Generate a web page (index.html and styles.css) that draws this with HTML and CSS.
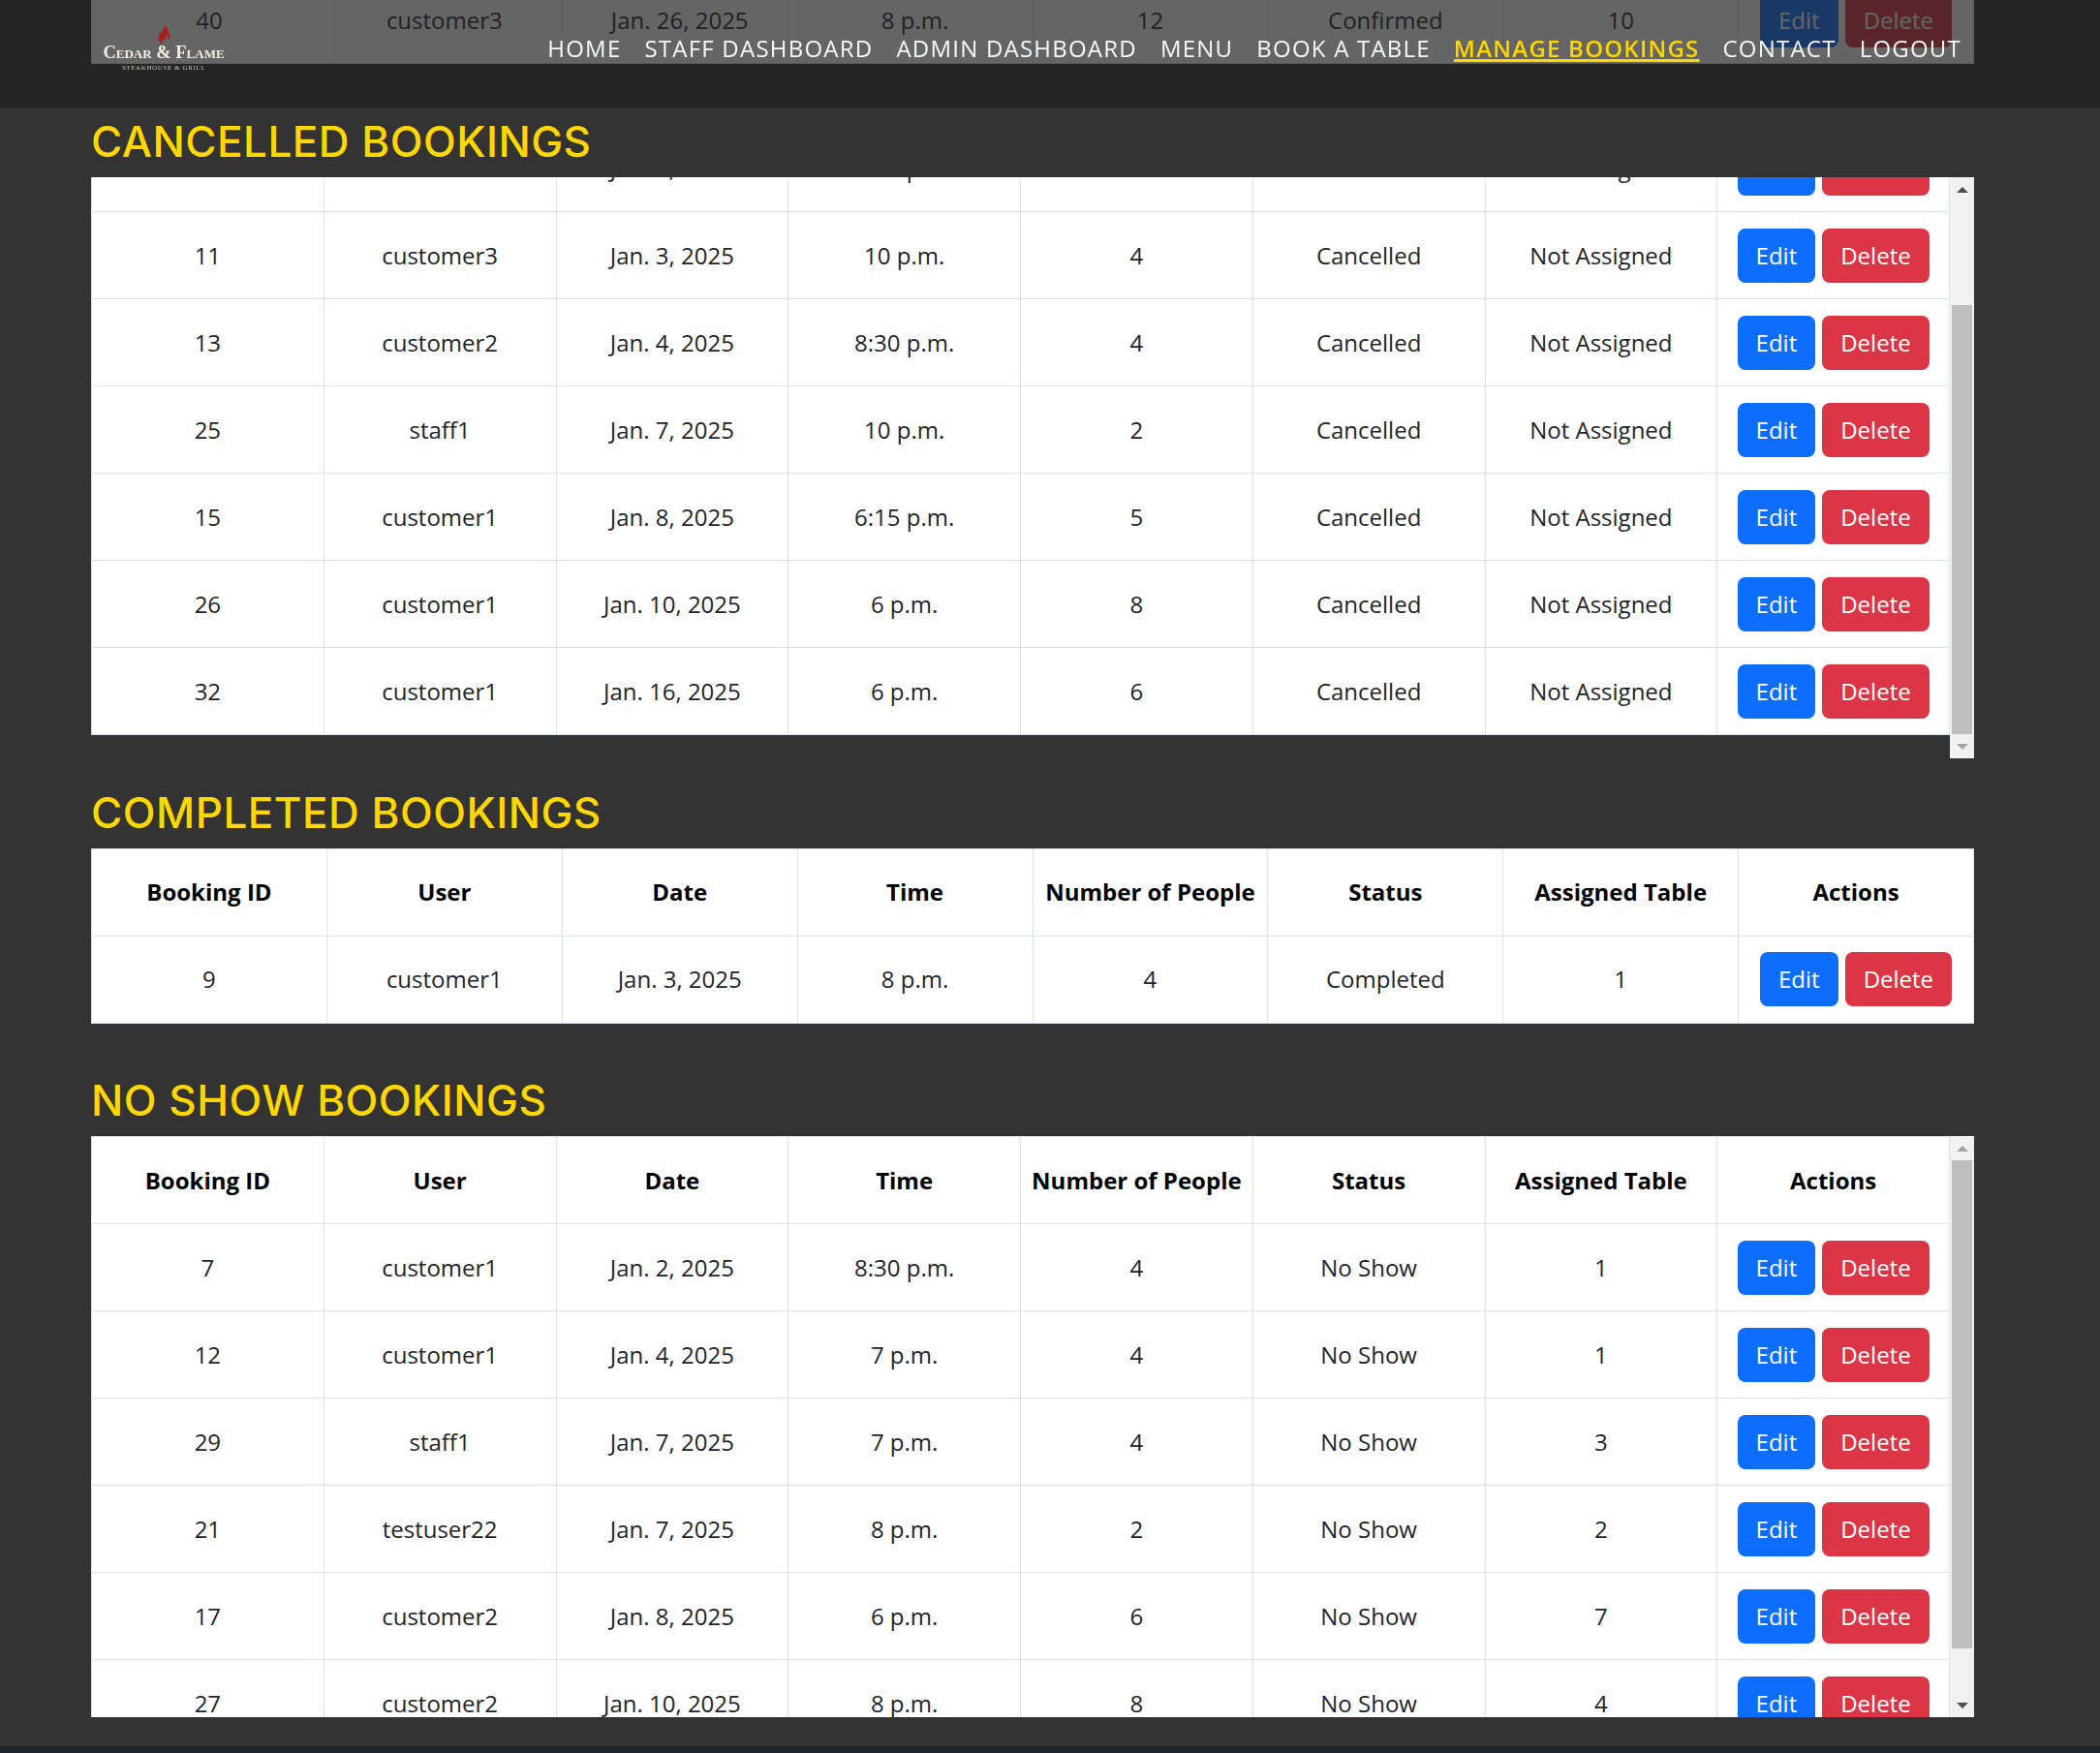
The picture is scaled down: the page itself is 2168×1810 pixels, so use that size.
FILE: index.html
```html
<!DOCTYPE html>
<html lang="en">

<head>
    <meta charset="UTF-8">
    <title>Manage Bookings</title>
    <link rel="stylesheet" href="styles.css">
</head>

<body>
    <header class="navbar">
        <div class="navbar-inner">
            <a class="logo">
                <svg class="logo-flame" viewBox="0 0 14 22" width="14" height="21">
                    <path d="M8 0c1 4-1 6-3 9C3 11 1 13 1 16c0 3 2 5 5 6-1-2-1-4 1-6 0 2 1 3 2 4-1-4 1-5 1-8 2 2 3 4 2 7 2-2 2-5 1-8C12 7 9 4 8 0z" fill="#a51f1f"/>
                </svg>
                <span class="logo-name">Cedar &amp; Flame</span>
                <span class="logo-sub">STEAKHOUSE &amp; GRILL</span>
            </a>
            <nav class="nav-links">
                <a>Home</a>
                <a>Staff Dashboard</a>
                <a>Admin Dashboard</a>
                <a>Menu</a>
                <a>Book a Table</a>
                <a class="active">Manage Bookings</a>
                <a>Contact</a>
                <a>Logout</a>
            </nav>
        </div>
    </header>

    <main class="content">
        <!-- end of the confirmed list, under the navbar -->
        <section class="section section-top">
            <table class="bookings">
                <tr><td>40</td><td>customer3</td><td>Jan. 26, 2025</td><td>8 p.m.</td><td>12</td><td>Confirmed</td><td>10</td><td><div class="actions"><a class="btn btn-edit">Edit</a><a class="btn btn-delete">Delete</a></div></td></tr>
            </table>
        </section>

        <section class="section section-scroll">
            <h2 class="section-title">Cancelled Bookings</h2>
            <div class="scroll-box">
                <div class="scroll-view">
                    <table class="bookings cancelled-list">
                        <tr><td>6</td><td>customer1</td><td>Jan. 2, 2025</td><td>8:30 p.m.</td><td>4</td><td>Cancelled</td><td>Not Assigned</td><td><div class="actions"><a class="btn btn-edit">Edit</a><a class="btn btn-delete">Delete</a></div></td></tr>
                        <tr><td>11</td><td>customer3</td><td>Jan. 3, 2025</td><td>10 p.m.</td><td>4</td><td>Cancelled</td><td>Not Assigned</td><td><div class="actions"><a class="btn btn-edit">Edit</a><a class="btn btn-delete">Delete</a></div></td></tr>
                        <tr><td>13</td><td>customer2</td><td>Jan. 4, 2025</td><td>8:30 p.m.</td><td>4</td><td>Cancelled</td><td>Not Assigned</td><td><div class="actions"><a class="btn btn-edit">Edit</a><a class="btn btn-delete">Delete</a></div></td></tr>
                        <tr><td>25</td><td>staff1</td><td>Jan. 7, 2025</td><td>10 p.m.</td><td>2</td><td>Cancelled</td><td>Not Assigned</td><td><div class="actions"><a class="btn btn-edit">Edit</a><a class="btn btn-delete">Delete</a></div></td></tr>
                        <tr><td>15</td><td>customer1</td><td>Jan. 8, 2025</td><td>6:15 p.m.</td><td>5</td><td>Cancelled</td><td>Not Assigned</td><td><div class="actions"><a class="btn btn-edit">Edit</a><a class="btn btn-delete">Delete</a></div></td></tr>
                        <tr><td>26</td><td>customer1</td><td>Jan. 10, 2025</td><td>6 p.m.</td><td>8</td><td>Cancelled</td><td>Not Assigned</td><td><div class="actions"><a class="btn btn-edit">Edit</a><a class="btn btn-delete">Delete</a></div></td></tr>
                        <tr><td>32</td><td>customer1</td><td>Jan. 16, 2025</td><td>6 p.m.</td><td>6</td><td>Cancelled</td><td>Not Assigned</td><td><div class="actions"><a class="btn btn-edit">Edit</a><a class="btn btn-delete">Delete</a></div></td></tr>
                    </table>
                </div>
                <div class="scrollbar">
                    <div class="scroll-btn"><span class="arrow-up"></span></div>
                    <div class="scroll-track">
                        <div class="thumb thumb-cancelled"></div>
                    </div>
                    <div class="scroll-btn"><span class="arrow-down arrow-off"></span></div>
                </div>
            </div>
        </section>

        <section class="section">
            <h2 class="section-title">Completed Bookings</h2>
            <table class="bookings completed-list">
                <tr><th>Booking ID</th><th>User</th><th>Date</th><th>Time</th><th>Number of People</th><th>Status</th><th>Assigned Table</th><th>Actions</th></tr>
                <tr><td>9</td><td>customer1</td><td>Jan. 3, 2025</td><td>8 p.m.</td><td>4</td><td>Completed</td><td>1</td><td><div class="actions"><a class="btn btn-edit">Edit</a><a class="btn btn-delete">Delete</a></div></td></tr>
            </table>
        </section>

        <section class="section">
            <h2 class="section-title">No Show Bookings</h2>
            <div class="scroll-box">
                <div class="scroll-view">
                    <table class="bookings">
                        <tr><th>Booking ID</th><th>User</th><th>Date</th><th>Time</th><th>Number of People</th><th>Status</th><th>Assigned Table</th><th>Actions</th></tr>
                        <tr><td>7</td><td>customer1</td><td>Jan. 2, 2025</td><td>8:30 p.m.</td><td>4</td><td>No Show</td><td>1</td><td><div class="actions"><a class="btn btn-edit">Edit</a><a class="btn btn-delete">Delete</a></div></td></tr>
                        <tr><td>12</td><td>customer1</td><td>Jan. 4, 2025</td><td>7 p.m.</td><td>4</td><td>No Show</td><td>1</td><td><div class="actions"><a class="btn btn-edit">Edit</a><a class="btn btn-delete">Delete</a></div></td></tr>
                        <tr><td>29</td><td>staff1</td><td>Jan. 7, 2025</td><td>7 p.m.</td><td>4</td><td>No Show</td><td>3</td><td><div class="actions"><a class="btn btn-edit">Edit</a><a class="btn btn-delete">Delete</a></div></td></tr>
                        <tr><td>21</td><td>testuser22</td><td>Jan. 7, 2025</td><td>8 p.m.</td><td>2</td><td>No Show</td><td>2</td><td><div class="actions"><a class="btn btn-edit">Edit</a><a class="btn btn-delete">Delete</a></div></td></tr>
                        <tr><td>17</td><td>customer2</td><td>Jan. 8, 2025</td><td>6 p.m.</td><td>6</td><td>No Show</td><td>7</td><td><div class="actions"><a class="btn btn-edit">Edit</a><a class="btn btn-delete">Delete</a></div></td></tr>
                        <tr><td>27</td><td>customer2</td><td>Jan. 10, 2025</td><td>8 p.m.</td><td>8</td><td>No Show</td><td>4</td><td><div class="actions"><a class="btn btn-edit">Edit</a><a class="btn btn-delete">Delete</a></div></td></tr>
                    </table>
                </div>
                <div class="scrollbar">
                    <div class="scroll-btn"><span class="arrow-up arrow-off"></span></div>
                    <div class="scroll-track">
                        <div class="thumb thumb-noshow"></div>
                    </div>
                    <div class="scroll-btn"><span class="arrow-down"></span></div>
                </div>
            </div>
        </section>
    </main>

    <footer class="footer"></footer>
</body>

</html>
```
FILE: styles.css
```css
* {
    box-sizing: border-box;
}

html,
body {
    height: 1810px;
    overflow: hidden;
}

body {
    margin: 0;
    background-color: #333;
    font-family: "Open Sans", "Noto Sans", sans-serif;
    font-size: 24px;
    color: #212529;
}

/* navbar */
.navbar {
    position: fixed;
    top: 0;
    left: 0;
    right: 0;
    z-index: 10;
    height: 112px;
    background-color: rgba(32, 32, 32, .69);
}

.navbar-inner {
    display: flex;
    justify-content: space-between;
    width: 1944px;
    margin-left: 94px;
    padding: 24px 13px 0 13px;
}

.logo {
    display: flex;
    flex-direction: column;
    align-items: center;
    width: 124px;
}

.logo-flame {
    display: block;
}

.logo-name {
    margin-top: 1px;
    font-family: "Liberation Serif", serif;
    font-variant: small-caps;
    font-weight: 700;
    font-size: 18.5px;
    line-height: 17px;
    white-space: nowrap;
    color: #f3efe4;
}

.logo-sub {
    margin-top: 3px;
    font-family: "Liberation Serif", serif;
    font-size: 7px;
    line-height: 8px;
    letter-spacing: .6px;
    white-space: nowrap;
    color: #c9c6be;
}

.nav-links {
    display: flex;
    gap: 24px;
    padding-top: 9px;
}

.nav-links a {
    font-size: 24px;
    line-height: 33px;
    letter-spacing: 1.22px;
    text-transform: uppercase;
    color: #f8f9fa;
}

.nav-links a.active {
    font-weight: 600;
    color: #ffd700;
    text-decoration: underline;
    text-decoration-thickness: 3px;
}

/* page */
.content {
    width: 1944px;
    margin: -25px 0 0 94px;
}

.section {
    margin-bottom: 52px;
}

.section-top {
    margin-bottom: 53px;
}

.section-scroll {
    margin-bottom: 29px;
}

.section-title {
    margin: 0 0 10px;
    padding-top: 1px;
    font-family: Inter, "Open Sans", sans-serif;
    font-size: 44px;
    font-weight: 500;
    line-height: 53px;
    text-transform: uppercase;
    letter-spacing: .5px;
    color: #ffd700;
}

/* tables */
.bookings {
    width: 100%;
    table-layout: fixed;
    border-collapse: collapse;
    background-color: #fff;
}

.bookings th,
.bookings td {
    height: 90px;
    padding: 0;
    border: 1px solid #dee2e6;
    text-align: center;
    vertical-align: middle;
}

.bookings th {
    font-weight: 700;
    color: #000;
}

.cancelled-list {
    margin-top: -55px;
}

.completed-list th,
.completed-list td {
    padding-bottom: 2px;
}

.actions {
    display: flex;
    justify-content: center;
    gap: 7px;
}

.btn {
    display: flex;
    align-items: center;
    height: 56px;
    padding: 0 19px;
    border-radius: 8px;
    color: #fff;
}

.btn-edit {
    background-color: #0d6efd;
}

.btn-delete {
    background-color: #dc3545;
}

/* scroller with the old style arrows */
.scroll-box {
    display: flex;
    height: 600px;
}

.scroll-view {
    flex: 1;
    overflow: hidden;
}

.scrollbar {
    display: flex;
    flex-direction: column;
    width: 25px;
    background-color: #f1f1f1;
}

.scroll-btn {
    display: flex;
    align-items: center;
    justify-content: center;
    height: 25px;
}

.arrow-up,
.arrow-down {
    width: 0;
    height: 0;
    border-left: 6px solid transparent;
    border-right: 6px solid transparent;
}

.arrow-up {
    border-bottom: 6px solid #505050;
}

.arrow-down {
    border-top: 6px solid #505050;
}

.arrow-up.arrow-off {
    border-bottom-color: #a3a3a3;
}

.arrow-down.arrow-off {
    border-top-color: #a3a3a3;
}

.scroll-track {
    flex: 1;
}

.thumb {
    margin: 0 2px;
    background-color: #bebebe;
}

.thumb-cancelled {
    height: 443px;
    margin-top: 107px;
}

.thumb-noshow {
    height: 504px;
}

.footer {
    height: 30px;
    margin-top: -22px;
    background-color: #212529;
}
```
